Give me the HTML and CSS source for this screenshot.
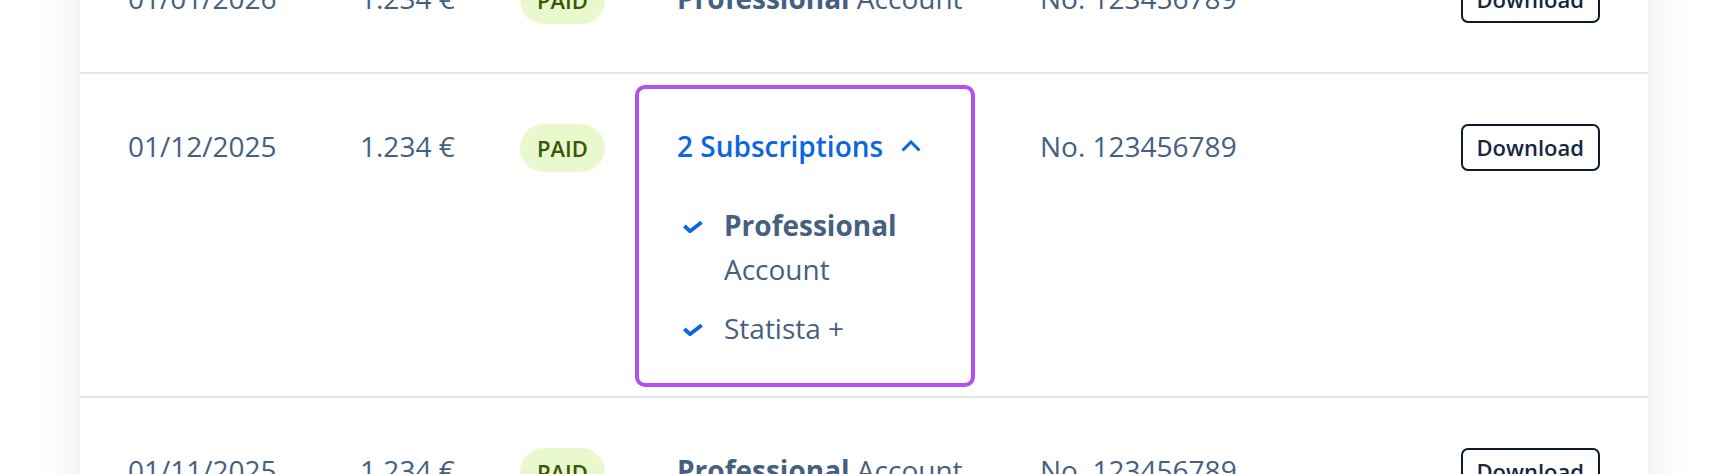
FILE: index.html
```html
<!DOCTYPE html>
<html lang="en">
<head>
<meta charset="utf-8">
<title>Invoices</title>
<link rel="stylesheet" href="styles.css">
</head>
<body>
<main class="card">
  <div class="row">
    <div class="cell">01/01/2026</div>
    <div class="cell">1.234 €</div>
    <div class="cell"><span class="badge">PAID</span></div>
    <div class="cell"><b>Professional</b> Account</div>
    <div class="cell">No. 123456789</div>
    <div class="cell"><button class="btn">Download</button></div>
  </div>
  <div class="row">
    <div class="cell">01/12/2025</div>
    <div class="cell">1.234 €</div>
    <div class="cell"><span class="badge">PAID</span></div>
    <div class="subs">
      <div class="subs-head">
        <span>2 Subscriptions</span>
        <svg class="chev" width="20" height="12" viewBox="0 0 20 12" aria-hidden="true"><path d="M1.5 10.5 L10 2 L18.5 10.5" fill="none" stroke="#0b66e4" stroke-width="3"/></svg>
      </div>
      <ul class="subs-list">
        <li>
          <span class="ico"><svg width="20" height="12" viewBox="0 0 20 12" aria-hidden="true"><path d="M1.4 5 L7 10.2 L18.6 1.2" fill="none" stroke="#0b66e4" stroke-width="3.8"/></svg></span>
          <span class="txt"><b>Professional</b> Account</span>
        </li>
        <li>
          <span class="ico"><svg width="20" height="12" viewBox="0 0 20 12" aria-hidden="true"><path d="M1.4 5 L7 10.2 L18.6 1.2" fill="none" stroke="#0b66e4" stroke-width="3.8"/></svg></span>
          <span class="txt">Statista +</span>
        </li>
      </ul>
    </div>
    <div class="cell">No. 123456789</div>
    <div class="cell"><button class="btn">Download</button></div>
  </div>
  <div class="row">
    <div class="cell">01/11/2025</div>
    <div class="cell">1.234 €</div>
    <div class="cell"><span class="badge">PAID</span></div>
    <div class="cell"><b>Professional</b> Account</div>
    <div class="cell">No. 123456789</div>
    <div class="cell"><button class="btn">Download</button></div>
  </div>
</main>
</body>
</html>
```
FILE: styles.css
```css
* { box-sizing: border-box; }

html, body {
  margin: 0;
  background: #ffffff;
  overflow: hidden;
}

body {
  font-family: "Open Sans", "Noto Sans", sans-serif;
  font-size: 28px;
  color: #46607f;
}

.card {
  margin: -74px 80px 0;
  background: #ffffff;
  box-shadow: 0 0 48px rgba(30, 40, 90, 0.09);
}

.row {
  display: grid;
  grid-template-columns: 232px 160px 157px 363px 1fr auto;
  align-items: start;
  padding: 48px 48px;
  border-bottom: 2px solid #e6e6e9;
}

.cell {
  line-height: 48px;
  white-space: nowrap;
}

.cell b, .txt b {
  font-weight: 700;
}

.badge {
  display: inline-block;
  vertical-align: top;
  margin-top: 2px;
  height: 48px;
  line-height: 48px;
  padding: 0 17px;
  border-radius: 24px;
  background: #eaf8cd;
  color: #375a06;
  font-size: 22px;
  font-weight: 600;
}

.btn {
  display: inline-block;
  vertical-align: top;
  margin-top: 2px;
  height: 47px;
  padding: 0 14px;
  border: 2px solid #0b1a2e;
  border-radius: 7px;
  background: #ffffff;
  color: #14273f;
  font-family: "Open Sans", "Noto Sans", sans-serif;
  font-size: 22px;
  font-weight: 600;
  line-height: 43px;
}

.subs {
  width: 340px;
  margin: -37px 0 -39px -42px;
  padding: 33px 38px;
  border: 4px solid #b250f6;
  border-radius: 10px;
}

.subs-head {
  display: flex;
  align-items: center;
  gap: 18px;
  height: 48px;
  color: #0b66e4;
  font-weight: 600;
  white-space: nowrap;
}

.chev { display: block; }

.subs-list {
  list-style: none;
  margin: 33px 0 0;
  padding: 0;
}

.subs-list li {
  display: flex;
  line-height: 44px;
}

.subs-list li + li {
  margin-top: 15px;
}

.ico {
  flex: 0 0 47px;
  padding-left: 6px;
}

.ico svg {
  display: block;
  margin-top: 18px;
}

.txt {
  flex: 1;
}
```
